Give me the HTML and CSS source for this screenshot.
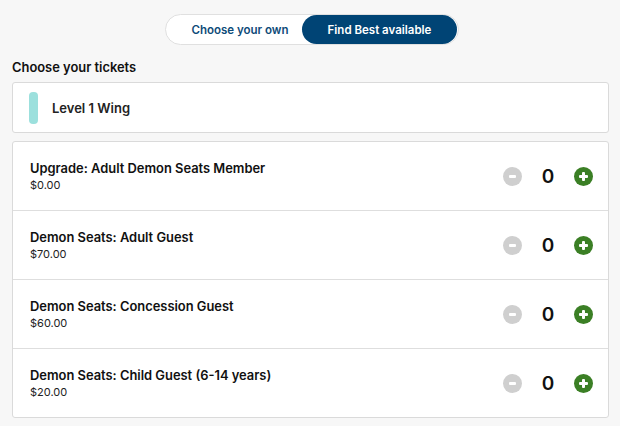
FILE: index.html
```html
<!DOCTYPE html>
<html>
<head>
<meta charset="utf-8">
<link rel="stylesheet" href="styles.css">
</head>
<body>
<div class="page">
  <div class="toggle-wrap">
    <div class="toggle">
      <button class="tab">Choose your own</button>
      <button class="tab active">Find Best available</button>
    </div>
  </div>
  <h2 class="heading">Choose your tickets</h2>
  <div class="card level">
    <span class="swatch"></span>
    <span class="level-name">Level 1 Wing</span>
  </div>
  <div class="card tickets">
    <div class="row">
      <div class="info"><div class="name">Upgrade: Adult Demon Seats Member</div><div class="price">$0.00</div></div>
      <div class="qty"><span class="btn minus"></span><span class="count">0</span><span class="btn plus"></span></div>
    </div>
    <div class="row">
      <div class="info"><div class="name">Demon Seats: Adult Guest</div><div class="price">$70.00</div></div>
      <div class="qty"><span class="btn minus"></span><span class="count">0</span><span class="btn plus"></span></div>
    </div>
    <div class="row">
      <div class="info"><div class="name">Demon Seats: Concession Guest</div><div class="price">$60.00</div></div>
      <div class="qty"><span class="btn minus"></span><span class="count">0</span><span class="btn plus"></span></div>
    </div>
    <div class="row">
      <div class="info"><div class="name">Demon Seats: Child Guest (6-14 years)</div><div class="price">$20.00</div></div>
      <div class="qty"><span class="btn minus"></span><span class="count">0</span><span class="btn plus"></span></div>
    </div>
  </div>
</div>
</body>
</html>
```
FILE: styles.css
```css
* { box-sizing: border-box; }
html, body { margin: 0; padding: 0; }
body {
  background: #f7f7f7;
  font-family: Inter, "Liberation Sans", sans-serif;
  color: #111;
}
.page { padding: 14px 11px 0 12px; }
.toggle-wrap { display: flex; justify-content: center; padding-left: 3px; }
.toggle {
  display: flex;
  background: #fff;
  border: 1px solid #e0e0e0;
  border-radius: 16px;
  height: 31px;
  width: 294px;
}
.tab {
  border: none;
  background: transparent;
  font-family: inherit;
  font-size: 11.5px;
  font-weight: 600;
  color: #0d4a78;
  border-radius: 15px;
  padding: 0;
  height: 29px;
}
.tab:first-child { width: 136px; padding-left: 12px; }
.tab.active { background: #004475; color: #fff; width: 155px; }
.heading {
  font-size: 12.9px;
  font-weight: 600;
  margin: 15px 0 6px 0;
  line-height: 16px;
}
.card {
  background: #fff;
  border: 1px solid #dadada;
  border-radius: 3px;
}
.level {
  display: flex;
  align-items: center;
  height: 51px;
  padding-left: 16px;
}
.swatch {
  width: 9px;
  height: 32px;
  border-radius: 4px;
  background: #9ce0dd;
  margin-right: 14px;
}
.level-name { font-size: 13px; font-weight: 600; color: #222; }
.tickets { margin-top: 8px; }
.row {
  display: flex;
  align-items: center;
  justify-content: space-between;
  height: 69px;
  border-top: 1px solid #dedede;
  padding: 0 15px 0 17px;
}
.row:first-child { border-top: none; height: 68px; }
.name { font-size: 12.9px; font-weight: 600; line-height: 17px; color: #111; }
.price { font-size: 11px; line-height: 15px; color: #222; margin-top: 1px; }
.qty { display: flex; align-items: center; padding-top: 1px; }
.btn {
  width: 19px; height: 19px; border-radius: 50%;
  position: relative;
  display: inline-block;
}
.btn::before, .btn::after {
  content: ""; position: absolute; background: #fff; border-radius: 1px;
}
.btn::before { width: 9px; height: 3px; left: 5px; top: 8px; }
.minus { background: #cfcfcf; }
.minus::before { width: 7px; left: 6px; }
.minus::after { display: none; }
.plus { background: #3b7f25; }
.plus::after { width: 3px; height: 9px; left: 8px; top: 5px; }
.count {
  width: 52px; text-align: center;
  font-size: 19px; font-weight: 600; color: #111;
}
```
